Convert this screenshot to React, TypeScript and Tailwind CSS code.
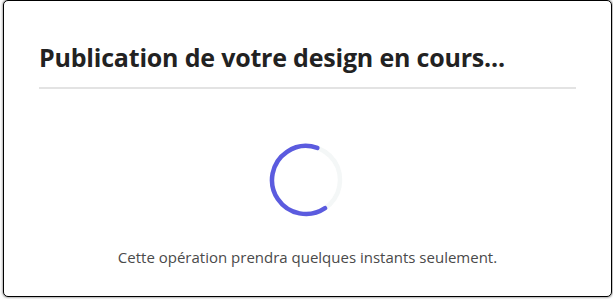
import React from "react";

export default function App() {
  const r = 34;
  const c = 2 * Math.PI * r;
  const span = 233 / 360;
  return (
    <div className="w-[613px] h-[299px] bg-white" style={{ fontFamily: '"Open Sans", "Noto Sans", sans-serif' }}>
      <div className="ml-[3px] w-[609px] h-[297px] border-[1.5px] border-black rounded-[5px] bg-white flex flex-col px-[35px] shadow-[0_0_2px_1px_rgba(120,120,120,0.6)]">
        <h1 className="mt-[40px] text-[25px] leading-[32px] font-bold text-[#222] tracking-[-0.2px]">
          Publication de votre design en cours...
        </h1>
        <div className="mt-[14px] h-[2px] bg-[#e3e3e3]" />
        <div className="flex flex-col items-center">
          <svg width="76" height="76" viewBox="0 0 76 76" className="mt-[53px] ml-[-4px]">
            <circle cx="38" cy="38" r={r} fill="none" stroke="#f4f7f7" strokeWidth="4.5" />
            <circle
              cx="38"
              cy="38"
              r={r}
              fill="none"
              stroke="#5b5bdf"
              strokeWidth="4.5"
              strokeLinecap="round"
              strokeDasharray={`${c * span} ${c}`}
              transform="rotate(56 38 38)"
            />
          </svg>
          <p className="mt-[29px] text-[15px] leading-[20px] text-[#4a4a4a]">
            Cette opération prendra quelques instants seulement.
          </p>
        </div>
      </div>
    </div>
  );
}
